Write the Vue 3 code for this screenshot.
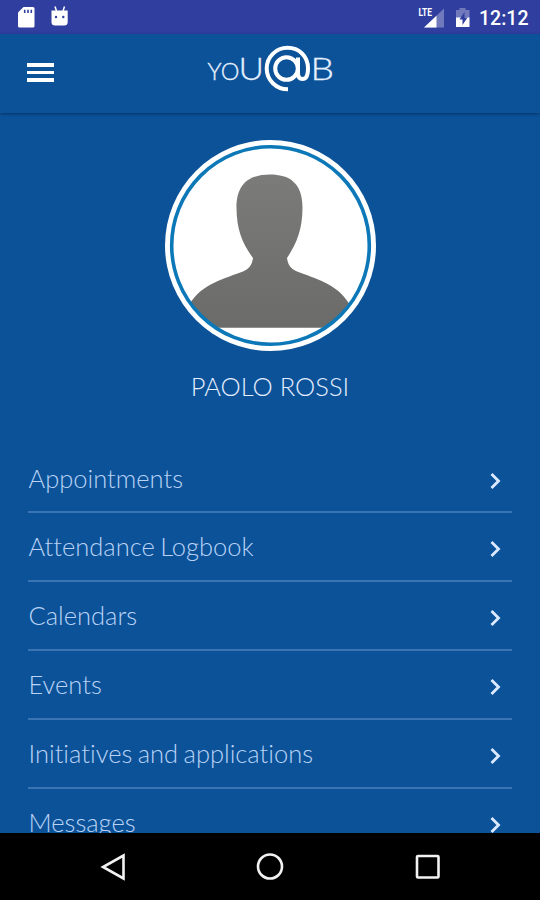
<template>
  <div class="screen">
    <div class="status-bar">
      <svg class="status-left" width="90" height="34" viewBox="0 0 90 34">
        <path d="M23.500 7H33a1.500 1.500 0 0 1 1.500 1.500V26a1.500 1.500 0 0 1-1.500 1.500H19.500A1.500 1.500 0 0 1 18 26V12.500z" fill="#fff" />
        <path d="M24.700 9.700v3.300M28 9.700v3.300M31.300 9.700v3.300" stroke="#303f9f" stroke-width="1.600" />
        <path d="M51.500 10.500h16.200V22q0 3.500-3.500 3.500H55q-3.500 0-3.500-3.500z" fill="#fff" />
        <path d="M55 6.500l1.500 4.500M64.500 6.500l-1.500 4.500" stroke="#fff" stroke-width="1.500" />
        <circle cx="56" cy="17" r="1.200" fill="#303f9f" />
        <circle cx="63.300" cy="17" r="1.200" fill="#303f9f" />
      </svg>
      <svg class="status-right" width="60" height="34" viewBox="415 0 60 34">
        <path d="M444 8.500V27.500H424z" fill="#7079bb" />
        <path d="M436.500 15.700V27.500H424z" fill="#fff" />
        <text x="418.500" y="16" class="lte" textLength="13.500" lengthAdjust="spacingAndGlyphs">LTE</text>
        <path d="M459.500 8h6v2h4v8h-13.500v-8h3.500z" fill="#7079bb" />
        <path d="M456 17.500h13.500V27H456z" fill="#fff" />
        <path d="M464.500 12l-5 7.500h3V25l5-7.500h-3z" fill="#303f9f" />
      </svg>
      <span class="clock">12:12</span>
    </div>

    <header class="toolbar">
      <button class="menu-button" aria-label="Menu">
        <span></span>
        <span></span>
        <span></span>
      </button>
      <svg class="logo" width="130" height="50" viewBox="205 44 130 50">
        <g class="logo-text">
          <text x="207.500" y="80" font-size="22.500" textLength="32" lengthAdjust="spacingAndGlyphs">YO</text>
          <text x="238.500" y="80" font-size="32" textLength="25.500" lengthAdjust="spacingAndGlyphs">U</text>
          <text x="310.500" y="80" font-size="32" textLength="23.500" lengthAdjust="spacingAndGlyphs">B</text>
        </g>
        <g fill="none" stroke="#fff" stroke-width="4">
          <circle cx="286.500" cy="68.500" r="11.300" />
          <path d="M298 57.500V73q0 6 4.500 6Q308 79 308 68.500C308 56 299 47.800 287.500 47.800S266.700 57 266.700 68.500 276 89.300 288 89.300" />
        </g>
      </svg>
    </header>

    <main class="content">
      <section class="profile">
        <div class="avatar">
          <svg width="211" height="211" viewBox="165 139.500 211 211">
            <defs>
              <linearGradient id="person" x1="0" y1="0" x2="0" y2="1">
                <stop offset="0" stop-color="#7b7b7a" />
                <stop offset="1" stop-color="#6b6b6a" />
              </linearGradient>
              <clipPath id="photo">
                <circle cx="270.500" cy="245" r="98" />
              </clipPath>
            </defs>
            <circle cx="270.500" cy="245" r="105.500" fill="#fff" />
            <g clip-path="url(#photo)">
              <path
                d="M270 174C289 174 302.500 182 302.500 207C302.500 230 296 244 287 257.500C288 264 290 268 297 271C315 278 337 283 349 303V327.300H190V303C202 283 225 278 243 271C250 268 252 264 253 257.500C243 244 236.500 230 236.500 207C236.500 182 251 174 270 174Z"
                fill="url(#person)"
              />
            </g>
            <circle cx="270.500" cy="245" r="98.800" fill="none" stroke="#0c78b8" stroke-width="3.600" />
          </svg>
        </div>
        <h1>PAOLO ROSSI</h1>
      </section>

      <ul class="menu">
        <li v-for="item in items" :key="item">
          <span>{{ item }}</span>
          <svg width="14" height="20" viewBox="0 0 14 20">
            <path d="M2.500 3l7 7-7 7" fill="none" stroke="#dbeaff" stroke-width="2.800" />
          </svg>
        </li>
      </ul>
    </main>

    <nav class="nav-bar">
      <svg width="30" height="30" viewBox="0 0 30 30">
        <path d="M25.500 3.500v23L5 15z" />
      </svg>
      <svg width="30" height="30" viewBox="0 0 30 30">
        <circle cx="15" cy="14.500" r="12" />
      </svg>
      <svg width="30" height="30" viewBox="0 0 30 30">
        <rect x="4" y="4" width="21.500" height="21.500" rx="1" />
      </svg>
    </nav>
  </div>
</template>

<script setup>
const items = [
  "Appointments",
  "Attendance Logbook",
  "Calendars",
  "Events",
  "Initiatives and applications",
  "Messages",
];
</script>

<style>
body {
  margin: 0;
  background: #0c5298;
}
</style>

<style scoped>
.screen {
  display: flex;
  flex-direction: column;
  width: 540px;
  height: 900px;
  overflow: hidden;
  background: #0c5298;
  font-family: Lato, sans-serif;
  font-weight: 300;
}
.status-bar {
  display: flex;
  flex: none;
  height: 34px;
  background: #303f9f;
}
.status-right {
  margin-left: auto;
}
.lte {
  font: 700 11px Roboto, sans-serif;
  fill: #fff;
}
.clock {
  width: 65px;
  padding-left: 4px;
  box-sizing: border-box;
  line-height: 37px;
  font-family: Roboto, sans-serif;
  font-size: 19.5px;
  font-weight: 500;
  color: #fff;
}
.toolbar {
  display: flex;
  flex: none;
  height: 79px;
  box-shadow: 0 1px 3px rgba(0, 20, 60, 0.5);
}
.menu-button {
  display: flex;
  flex-direction: column;
  gap: 4px;
  width: 27px;
  margin: 29px 0 0 26.5px;
  padding: 0;
  border: 0;
  background: none;
}
.menu-button span {
  width: 27px;
  height: 3.7px;
  background: #fff;
}
.logo {
  margin: 10px 0 0 151.5px;
}
.logo-text {
  fill: #e6f0ff;
  stroke: #e6f0ff;
  stroke-width: 0.3;
  font-family: Lato, sans-serif;
  font-weight: 300;
}
.content {
  flex: 1;
  min-height: 0;
  overflow: hidden;
}
.profile {
  display: flex;
  flex-direction: column;
  align-items: center;
  padding-top: 26.5px;
}
.avatar,
.avatar svg {
  display: block;
  width: 211px;
  height: 211px;
}
.profile h1 {
  margin: 20px 0 0;
  line-height: 30px;
  font-size: 25.5px;
  font-weight: 300;
  color: #e3edff;
}
.menu {
  margin: 43.6px 28px 0;
  padding: 0;
  list-style: none;
}
.menu li {
  display: flex;
  align-items: center;
  justify-content: space-between;
  height: 68.9px;
  padding: 0 9px 0 0.5px;
  box-sizing: border-box;
  border-bottom: 2px solid #3b74b2;
  font-size: 25.5px;
  font-variant-ligatures: none;
  word-spacing: -1.5px;
  color: #b9d2f6;
}
.menu svg {
  margin-top: 6px;
}
.nav-bar {
  display: flex;
  flex: none;
  align-items: center;
  justify-content: center;
  gap: 127.5px;
  height: 67px;
  background: #000;
}
.nav-bar svg {
  fill: none;
  stroke: #f2f2f2;
  stroke-width: 2.6;
}
</style>
